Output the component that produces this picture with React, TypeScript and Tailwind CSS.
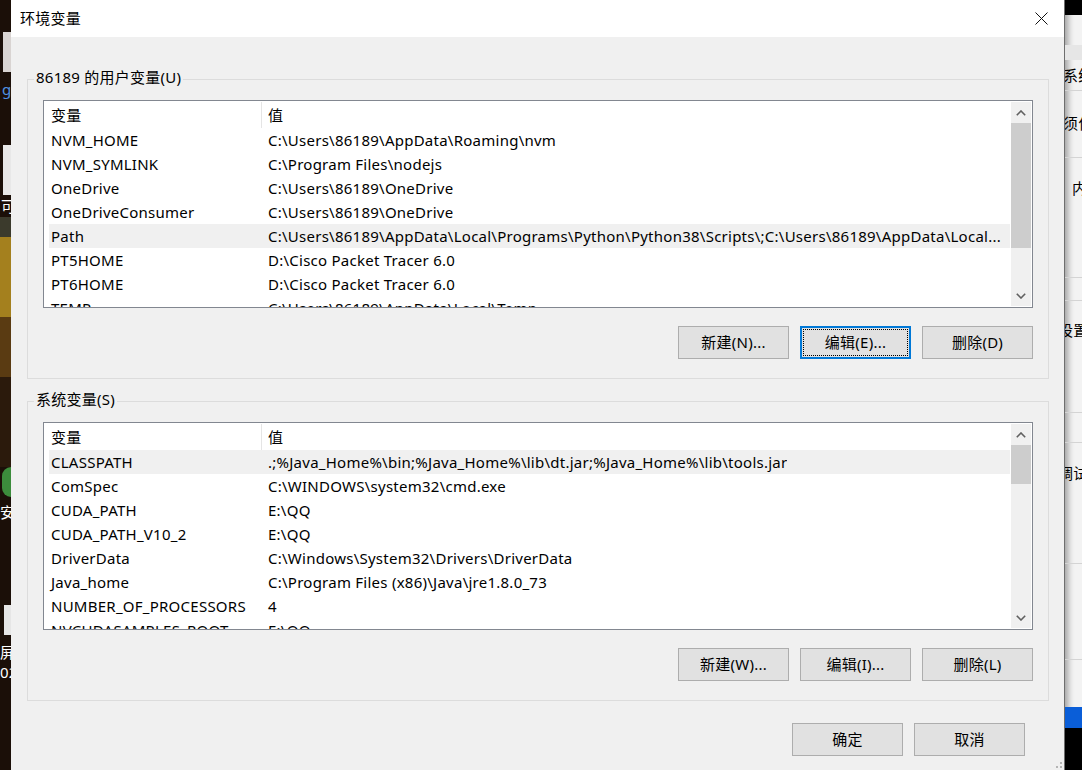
import React from "react";

type Row = [string, string];

const userVars: Row[] = [
  ["NVM_HOME", "C:\\Users\\86189\\AppData\\Roaming\\nvm"],
  ["NVM_SYMLINK", "C:\\Program Files\\nodejs"],
  ["OneDrive", "C:\\Users\\86189\\OneDrive"],
  ["OneDriveConsumer", "C:\\Users\\86189\\OneDrive"],
  ["Path", "C:\\Users\\86189\\AppData\\Local\\Programs\\Python\\Python38\\Scripts\\;C:\\Users\\86189\\AppData\\Local..."],
  ["PT5HOME", "D:\\Cisco Packet Tracer 6.0"],
  ["PT6HOME", "D:\\Cisco Packet Tracer 6.0"],
  ["TEMP", "C:\\Users\\86189\\AppData\\Local\\Temp"],
];

const sysVars: Row[] = [
  ["CLASSPATH", ".;%Java_Home%\\bin;%Java_Home%\\lib\\dt.jar;%Java_Home%\\lib\\tools.jar"],
  ["ComSpec", "C:\\WINDOWS\\system32\\cmd.exe"],
  ["CUDA_PATH", "E:\\QQ"],
  ["CUDA_PATH_V10_2", "E:\\QQ"],
  ["DriverData", "C:\\Windows\\System32\\Drivers\\DriverData"],
  ["Java_home", "C:\\Program Files (x86)\\Java\\jre1.8.0_73"],
  ["NUMBER_OF_PROCESSORS", "4"],
  ["NVCUDASAMPLES_ROOT", "E:\\QQ"],
];

function Chevron({ up }: { up?: boolean }) {
  return (
    <svg width="10" height="6" viewBox="0 0 10 6">
      <polyline
        points={up ? "0.8,5.2 5,1 9.2,5.2" : "0.8,0.8 5,5 9.2,0.8"}
        fill="none"
        stroke="#606060"
        strokeWidth="1.6"
      />
    </svg>
  );
}

function VarList({ rows, selected, thumb }: { rows: Row[]; selected: number; thumb: number }) {
  return (
    <div className="flex h-[208px] border border-[#828790] bg-white overflow-hidden">
      {/* 表格内容 */}
      <div className="w-[966px] overflow-hidden">
        <div className="flex h-[27px] items-center pt-[1px]">
          <div className="w-[218px] h-full flex items-center pl-[7px] border-r border-[#e5e5e5]">变量</div>
          <div className="pl-[6px]">值</div>
        </div>
        {rows.map(([name, value], i) => (
          <div
            key={name}
            className={`ml-[5px] flex h-[24px] items-center whitespace-nowrap ${i === selected ? "bg-[#f0f0f0]" : ""}`}
          >
            <div className="w-[212px] pl-[2px] shrink-0">{name}</div>
            <div className="pl-[7px] overflow-hidden">{value}</div>
          </div>
        ))}
      </div>
      {/* 滚动条 */}
      <div className="w-[22px] p-[1px] bg-white">
        <div className="h-full flex flex-col bg-[#f0f0f0]">
          <div className="h-[21px] flex items-center justify-center">
            <Chevron up />
          </div>
          <div className="bg-[#cdcdcd]" style={{ height: thumb }} />
          <div className="flex-1" />
          <div className="h-[21px] flex items-center justify-center">
            <Chevron />
          </div>
        </div>
      </div>
    </div>
  );
}

function Btn({ label, focused }: { label: string; focused?: boolean }) {
  if (focused) {
    return (
      <div className="w-[111px] h-[33px] border-2 border-[#0078d7] bg-[#e1e1e1] p-[1px]">
        <div className="h-full w-full border border-dotted border-black flex items-center justify-center">
          {label}
        </div>
      </div>
    );
  }
  return (
    <div className="w-[111px] h-[33px] border border-[#adadad] bg-[#e1e1e1] flex items-center justify-center">
      {label}
    </div>
  );
}

function Group({ title, children }: { title: string; children: React.ReactNode }) {
  return (
    <fieldset className="border border-[#dcdcdc] px-[15px] pt-[11px] pb-[19px]">
      <legend className="-ml-[9px] px-[2px] leading-[20px] -translate-y-[2px]">{title}</legend>
      {children}
    </fieldset>
  );
}

function LeftDesktop() {
  return (
    <div className="w-[11px] shrink-0 flex flex-col bg-[#1b0f08] overflow-hidden text-white text-[15px] leading-none">
      <div className="h-[32px]" />
      <div className="h-[40px] ml-[3px] bg-[#d9d4d2]" />
      <div className="h-[10px]" />
      <div className="h-[20px] text-[#4f8fe0] pl-[2px]">g</div>
      <div className="h-[43px]" />
      <div className="h-[50px] ml-[3px] bg-[#e8e8e8]" />
      <div className="h-[22px] pl-[1px] pt-[4px]">可</div>
      <div className="h-[20px] bg-[#3b3a2c]" />
      <div className="h-[80px] bg-[#a4801e]" />
      <div className="h-[60px] bg-[#5a3b12]" />
      <div className="h-[90px] bg-[#2b1a0c]" />
      <div className="h-[30px] bg-[#3c8c3c] ml-[2px] rounded-l-full" />
      <div className="h-[8px]" />
      <div className="h-[22px]">安</div>
      <div className="h-[78px]" />
      <div className="h-[30px] ml-[4px] bg-[#e6e6e6]" />
      <div className="h-[10px]" />
      <div className="h-[20px]">屏</div>
      <div className="h-[20px]">02</div>
    </div>
  );
}

function RightWindow() {
  return (
    <div className="flex-1 flex flex-col bg-[#f3f3f3] shadow-[inset_7px_0_6px_-4px_rgba(0,0,0,0.35)] overflow-hidden text-[15px] whitespace-nowrap">
      <div className="h-[15px] bg-black" />
      <div className="h-[30px]" />
      <div className="h-[15px] bg-[#e6e6e6]" />
      <div className="h-[31px] border-b border-[#d4d4d4] flex items-center -ml-[2px]">系统</div>
      <div className="h-[67px] border-b border-[#d4d4d4] -ml-[2px] pt-[21px]">须作</div>
      <div className="h-[120px] border-b border-[#d4d4d4] pl-[7px] pt-[19px]">内</div>
      <div className="h-[23px] border-b border-[#d4d4d4]" />
      <div className="h-[112px] border-b border-[#d4d4d4] -ml-[7px] pt-[18px]">设置</div>
      <div className="h-[30px] border-b border-[#d4d4d4]" />
      <div className="h-[121px] border-b border-[#d4d4d4] -ml-[7px] pt-[19px]">调试</div>
      <div className="h-[96px] border-b border-[#d4d4d4]" />
      <div className="h-[47px]" />
      <div className="h-[21px] bg-[#0a5ed8]" />
      <div className="flex-1 bg-black" />
    </div>
  );
}

export default function App() {
  return (
    <div
      className="flex w-[1082px] h-[770px] overflow-hidden text-[15px] text-black leading-normal tracking-[0.25px]"
      style={{ fontFamily: '"Segoe UI", "Noto Sans", "Noto Sans CJK SC", sans-serif' }}
    >
      <LeftDesktop />

      <div className="relative w-[1054px] shrink-0 flex flex-col bg-[#f0f0f0] border-r border-[#6e6e6e]">
        {/* 标题栏 */}
        <div className="h-[37px] bg-white flex items-center justify-between pl-[9px]">
          <span className="text-[15px]">环境变量</span>
          <div className="w-[45px] h-full flex items-center justify-center">
            <svg width="13" height="13" viewBox="0 0 13 13">
              <path d="M0.5 0.5 L12.5 12.5 M12.5 0.5 L0.5 12.5" stroke="#111" strokeWidth="1" />
            </svg>
          </div>
        </div>

        <div className="flex flex-col pl-[16px] pr-[15px] pt-[32px] gap-[12px]">
          <Group title="86189 的用户变量(U)">
            <VarList rows={userVars} selected={4} thumb={125} />
            <div className="mt-[18px] flex justify-end gap-[11px]">
              <Btn label="新建(N)..." />
              <Btn label="编辑(E)..." focused />
              <Btn label="删除(D)" />
            </div>
          </Group>

          <Group title="系统变量(S)">
            <VarList rows={sysVars} selected={0} thumb={39} />
            <div className="mt-[18px] flex justify-end gap-[11px]">
              <Btn label="新建(W)..." />
              <Btn label="编辑(I)..." />
              <Btn label="删除(L)" />
            </div>
          </Group>
        </div>

        <div className="mt-[22px] flex justify-end gap-[11px] pr-[39px]">
          <Btn label="确定" />
          <Btn label="取消" />
        </div>

        {/* 右下角拖拽手柄 */}
        <svg className="absolute right-[1px] bottom-0" width="9" height="9" viewBox="0 0 9 9">
          <rect x="6" y="1" width="2" height="2" fill="#b5b5b5" />
          <rect x="2" y="5" width="2" height="2" fill="#b5b5b5" />
          <rect x="6" y="5" width="2" height="2" fill="#b5b5b5" />
        </svg>
      </div>

      <RightWindow />
    </div>
  );
}
